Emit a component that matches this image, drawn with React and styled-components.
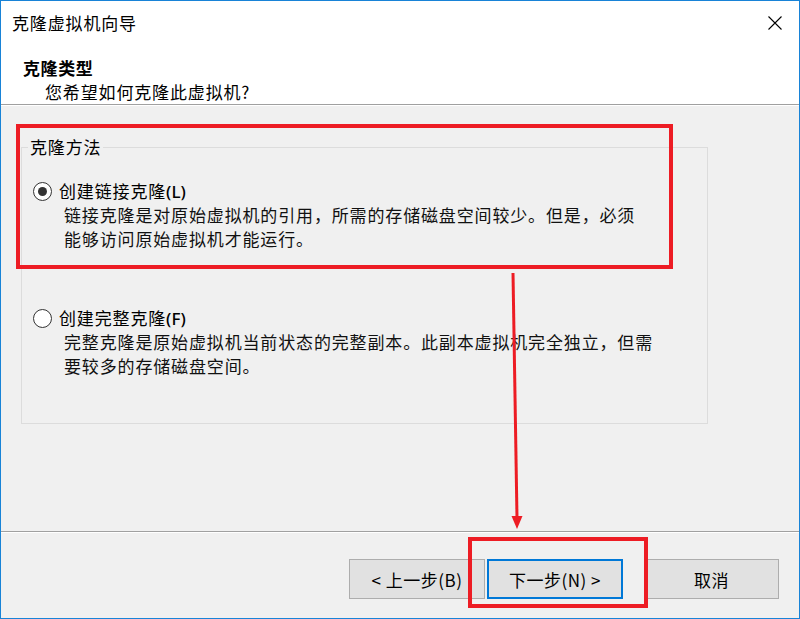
import React from "react";
import styled, { createGlobalStyle } from "styled-components";

const Global = createGlobalStyle`
  html, body { margin: 0; padding: 0; background: #f0f0f0; }
  * { box-sizing: border-box; }
  body {
    font-family: "Noto Sans CJK SC", "Noto Sans", sans-serif;
    color: #000;
  }
`;

const Window = styled.div`
  position: relative;
  width: 800px;
  height: 619px;
  border: 1px solid #1883d7;
  background: #f0f0f0;
  display: flex;
  flex-direction: column;
  overflow: hidden;
`;

const Header = styled.div`
  background: #fff;
  height: 103px;
  display: flex;
  flex-direction: column;
`;

const TitleBar = styled.div`
  height: 44px;
  display: flex;
  align-items: center;
  justify-content: space-between;
  padding: 0 17px 0 11px;
`;

const Title = styled.div`
  font-size: 17px;
  letter-spacing: 0.85px;
  line-height: 24px;
`;

const CloseBtn = styled.div`
  width: 14px;
  height: 14px;
  display: flex;
`;

const HeaderInfo = styled.div`
  padding: 11px 0 0 22px;
`;

const PageTitle = styled.div`
  font-size: 17px;
  font-weight: 700;
  letter-spacing: 0.6px;
  line-height: 24px;
`;

const PageSub = styled.div`
  font-size: 17px;
  letter-spacing: 0.85px;
  line-height: 24px;
  padding-left: 22px;
`;

const Separator = styled.div`
  height: 2px;
  border-top: 1px solid #a0a0a0;
  border-bottom: 1px solid #fff;
  flex: none;
`;

const Body = styled.div`
  flex: 1;
  padding: 29px 0 0 20px;
`;

const Group = styled.fieldset`
  margin: 0;
  width: 687px;
  height: 289px;
  border: 1px solid #dcdcdc;
  padding: 0 0 0 6px;
  min-width: 0;
`;

const Legend = styled.legend`
  padding: 0 2px;
  font-size: 17px;
  letter-spacing: 0.85px;
  line-height: 24px;
`;

const Option = styled.div`
  margin: ${(p) => p.$top}px 0 0 5px;
`;

const OptionRow = styled.div`
  display: flex;
  align-items: center;
  gap: 7px;
  height: 24px;
`;

const Radio = styled.span`
  width: 19px;
  height: 19px;
  border-radius: 50%;
  border: 1px solid #333;
  background: #fff;
  display: flex;
  align-items: center;
  justify-content: center;
  flex: none;
  &::after {
    content: "";
    width: 9px;
    height: 9px;
    border-radius: 50%;
    background: #333;
    display: ${(p) => (p.$checked ? "block" : "none")};
  }
`;

const OptionLabel = styled.span`
  font-size: 17px;
  letter-spacing: 0.85px;
  line-height: 24px;
`;

const Hot = styled.span`
  font-family: "Noto Sans", "Open Sans", sans-serif;
  font-weight: 500;
  letter-spacing: 0;
`;

const Desc = styled.div`
  padding-left: 31px;
  font-size: 17px;
  letter-spacing: 0.85px;
  line-height: 24px;
  color: #111;
`;

const Footer = styled.div`
  height: 85px;
  display: flex;
  align-items: flex-start;
  justify-content: flex-end;
  padding: 26px 20px 0 0;
`;

const Button = styled.div`
  width: ${(p) => p.$w || 136}px;
  height: 40px;
  margin-left: ${(p) => p.$gap || 0}px;
  background: #e1e1e1;
  border: ${(p) => (p.$default ? "2px solid #0078d7" : "1px solid #adadad")};
  display: flex;
  align-items: center;
  justify-content: center;
  font-size: 17px;
  letter-spacing: 0.5px;
`;

const Overlay = styled.svg`
  position: absolute;
  left: -1px;
  top: -1px;
  pointer-events: none;
`;

export default function App() {
  return (
    <>
      <Global />
      <Window>
        <Header>
          <TitleBar>
            <Title>克隆虚拟机向导</Title>
            <CloseBtn>
              <svg width="14" height="14" viewBox="0 0 14 14">
                <path d="M0.5 0.5 L13.5 13.5 M13.5 0.5 L0.5 13.5" stroke="#000" strokeWidth="1.1" fill="none" />
              </svg>
            </CloseBtn>
          </TitleBar>
          <HeaderInfo>
            <PageTitle>克隆类型</PageTitle>
            <PageSub>您希望如何克隆此虚拟机?</PageSub>
          </HeaderInfo>
        </Header>
        <Separator />
        <Body>
          <Group>
            <Legend>克隆方法</Legend>
            <Option $top={20}>
              <OptionRow>
                <Radio $checked />
                <OptionLabel>
                  创建链接克隆<Hot>(L)</Hot>
                </OptionLabel>
              </OptionRow>
              <Desc>
                链接克隆是对原始虚拟机的引用，所需的存储磁盘空间较少。但是，必须
                <br />
                能够访问原始虚拟机才能运行。
              </Desc>
            </Option>
            <Option $top={55}>
              <OptionRow>
                <Radio />
                <OptionLabel>
                  创建完整克隆<Hot>(F)</Hot>
                </OptionLabel>
              </OptionRow>
              <Desc>
                完整克隆是原始虚拟机当前状态的完整副本。此副本虚拟机完全独立，但需
                <br />
                要较多的存储磁盘空间。
              </Desc>
            </Option>
          </Group>
        </Body>
        <Separator />
        <Footer>
          <Button>&lt; 上一步(B)</Button>
          <Button $gap={2} $default>下一步(N) &gt;</Button>
          <Button $gap={21} $w={135}>取消</Button>
        </Footer>
        <Overlay width="800" height="619" viewBox="0 0 800 619">
          <rect x="18" y="126" width="653" height="141" fill="none" stroke="#ed1c24" strokeWidth="4" />
          <rect x="470" y="539" width="176" height="67" fill="none" stroke="#ed1c24" strokeWidth="4" />
          <line x1="513" y1="273" x2="517" y2="518" stroke="#ed1c24" strokeWidth="3" />
          <polygon points="511.5,516 522.5,516 517,529" fill="#ed1c24" />
        </Overlay>
      </Window>
    </>
  );
}
